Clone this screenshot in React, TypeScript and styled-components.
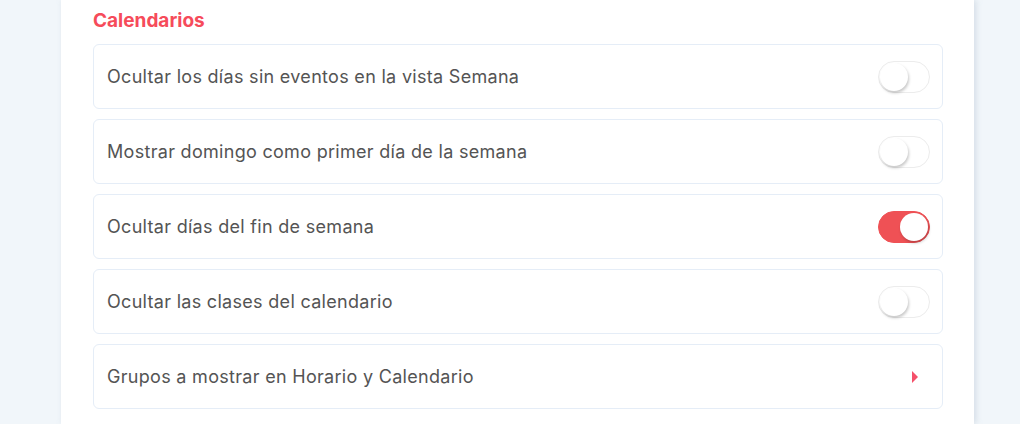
import React, { useState } from "react";
import styled, { createGlobalStyle } from "styled-components";

const Global = createGlobalStyle`
  html, body { margin: 0; padding: 0; background: #f1f6fa; }
  body { font-family: Inter, "Noto Sans", sans-serif; }
  * { box-sizing: border-box; }
`;

const Page = styled.div`
  display: flex;
  padding-left: 61px;
  height: 424px;
  overflow: hidden;
`;

const Panel = styled.div`
  width: 913px;
  background: #ffffff;
  box-shadow: 2px 0 6px rgba(160, 175, 195, 0.35);
  padding: 8px 31px 0 32px;
  min-height: 424px;
`;

const Heading = styled.h2`
  margin: 0 0 11px 0;
  font-size: 19px;
  line-height: 25px;
  font-weight: 700;
  color: #f64b5a;
`;

const List = styled.div`
  display: flex;
  flex-direction: column;
  gap: 10px;
`;

const Row = styled.div`
  display: flex;
  align-items: center;
  justify-content: space-between;
  height: 65px;
  padding: 0 12px 0 13px;
  border: 1px solid #e5edf7;
  border-radius: 6px;
  background: #fff;
`;

const Label = styled.span`
  font-size: 18px;
  color: #545454;
  letter-spacing: 0.3px;
`;

const Track = styled.button<{ $on: boolean }>`
  position: relative;
  width: 52px;
  height: 32px;
  padding: 0;
  border-radius: 16px;
  border: 1px solid ${(p) => (p.$on ? "#ef5155" : "#ececec")};
  background: ${(p) => (p.$on ? "#ef5155" : "#ffffff")};
  cursor: pointer;
`;

const Knob = styled.span<{ $on: boolean }>`
  position: absolute;
  top: 1px;
  left: ${(p) => (p.$on ? "21px" : "1px")};
  width: 28px;
  height: 28px;
  border-radius: 50%;
  background: #fff;
  box-shadow: 1px 2px 3px rgba(0, 0, 0, 0.22);
`;

const Arrow = styled.span`
  width: 0;
  height: 0;
  margin-right: 12px;
  border-top: 6px solid transparent;
  border-bottom: 6px solid transparent;
  border-left: 6px solid #f5506a;
`;

const items = [
  { label: "Ocultar los días sin eventos en la vista Semana", on: false },
  { label: "Mostrar domingo como primer día de la semana", on: false },
  { label: "Ocultar días del fin de semana", on: true },
  { label: "Ocultar las clases del calendario", on: false },
];

function Toggle({ initial }: { initial: boolean }) {
  const [on, setOn] = useState(initial);
  return (
    <Track $on={on} onClick={() => setOn(!on)} aria-pressed={on}>
      <Knob $on={on} />
    </Track>
  );
}

export default function App() {
  return (
    <>
      <Global />
      <Page>
        <Panel>
          <Heading>Calendarios</Heading>
          <List>
            {items.map((it) => (
              <Row key={it.label}>
                <Label>{it.label}</Label>
                <Toggle initial={it.on} />
              </Row>
            ))}
            <Row>
              <Label>Grupos a mostrar en Horario y Calendario</Label>
              <Arrow />
            </Row>
          </List>
        </Panel>
      </Page>
    </>
  );
}
